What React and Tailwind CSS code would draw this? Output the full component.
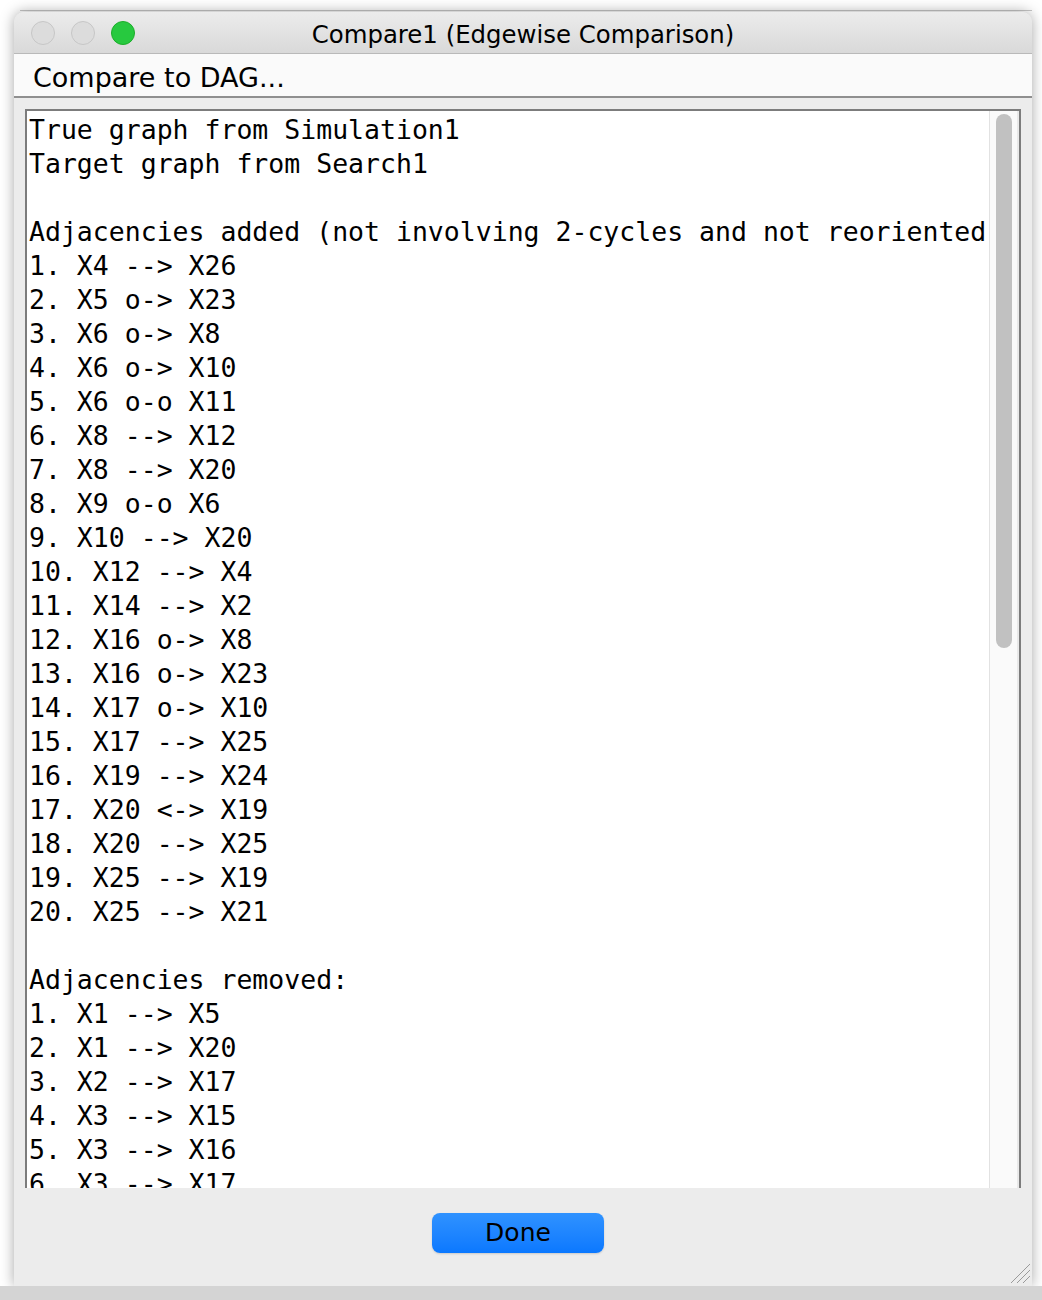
import React from 'react'

const lines = [
  'True graph from Simulation1',
  'Target graph from Search1',
  '',
  'Adjacencies added (not involving 2-cycles and not reoriented',
  '1. X4 --> X26',
  '2. X5 o-> X23',
  '3. X6 o-> X8',
  '4. X6 o-> X10',
  '5. X6 o-o X11',
  '6. X8 --> X12',
  '7. X8 --> X20',
  '8. X9 o-o X6',
  '9. X10 --> X20',
  '10. X12 --> X4',
  '11. X14 --> X2',
  '12. X16 o-> X8',
  '13. X16 o-> X23',
  '14. X17 o-> X10',
  '15. X17 --> X25',
  '16. X19 --> X24',
  '17. X20 <-> X19',
  '18. X20 --> X25',
  '19. X25 --> X19',
  '20. X25 --> X21',
  '',
  'Adjacencies removed:',
  '1. X1 --> X5',
  '2. X1 --> X20',
  '3. X2 --> X17',
  '4. X3 --> X15',
  '5. X3 --> X16',
  '6. X3 --> X17',
]

const ui = { fontFamily: '"DejaVu Sans", "Liberation Sans", sans-serif' }
const mono = { fontFamily: '"DejaVu Sans Mono", "Liberation Mono", monospace' }

function TrafficLight({ color }) {
  return (
    <div
      className={`w-[24px] h-[24px] rounded-full border ${
        color === 'green' ? 'bg-[#27c93f] border-[#1dad2b]' : 'bg-[#dcdcdc] border-[#c6c6c6]'
      }`}
    />
  )
}

function ResizeGrip() {
  return (
    <svg width="22" height="22" viewBox="0 0 22 22" className="text-[#9a9a9a]">
      <line x1="2" y1="21" x2="21" y2="2" stroke="currentColor" strokeWidth="1" />
      <line x1="8" y1="21" x2="21" y2="8" stroke="currentColor" strokeWidth="1" />
      <line x1="14" y1="21" x2="21" y2="14" stroke="currentColor" strokeWidth="1" />
    </svg>
  )
}

export default function App() {
  return (
    <div className="w-[1042px] h-[1300px] bg-white flex flex-col overflow-hidden" style={ui}>
      <div className="h-[10px] shrink-0" />
      <div className="h-px shrink-0 ml-[20px] w-[1012px] bg-[#c8c8c8]" />
      <div className="h-px shrink-0" />

      {/* Window */}
      <div className="ml-[14px] w-[1018px] h-[1274px] shrink-0 rounded-t-[10px] bg-[#ececec] flex flex-col overflow-hidden shadow-[0_0_14px_rgba(0,0,0,0.35)]">
        {/* Title bar */}
        <div className="h-[42px] shrink-0 relative flex items-center bg-gradient-to-b from-[#ececec] to-[#d9d9d9] border-b border-[#b9b9b9]">
          <div className="flex items-center gap-[16px] pl-[17px]">
            <TrafficLight />
            <TrafficLight />
            <TrafficLight color="green" />
          </div>
          <div className="absolute inset-0 pt-[5px] flex items-center justify-center text-[24.4px] text-black">
            Compare1 (Edgewise Comparison)
          </div>
        </div>

        {/* Menu bar */}
        <div className="h-[44px] shrink-0 bg-[#fafafa] border-b-2 border-[#8f8f8f] flex items-center pl-[19px] pt-[6px] text-[27px] text-black">
          Compare to DAG...
        </div>

        {/* Text pane */}
        <div className="pt-[11px] px-[11px] shrink-0">
          <div className="h-[1079px] border-t-2 border-x-2 border-[#7c7c7c] bg-white flex overflow-hidden">
            <div
              className="flex-1 pl-[2px] pt-[2px] text-[26.5px] leading-[34px] text-black whitespace-pre overflow-hidden"
              style={mono}
            >
              {lines.map((l, i) => (
                <div key={i} className="h-[34px]">{l}</div>
              ))}
            </div>
            <div className="w-[30px] shrink-0 bg-[#fafafa] border-l border-[#e2e2e2] border-r-2 border-r-[#e9e9e9] flex justify-center pt-[3px]">
              <div className="w-[16px] h-[534px] rounded-full bg-[#c1c1c1]" />
            </div>
          </div>
        </div>

        {/* Button panel */}
        <div className="flex-1 relative flex justify-center pt-[25px] pr-[10px]">
          <button className="w-[172px] h-[40px] rounded-[8px] bg-gradient-to-b from-[#2f92ff] to-[#0a78ff] text-[25px] text-black flex items-center justify-center shadow-[0_1px_2px_rgba(0,0,0,0.15)]">
            Done
          </button>
          <div className="absolute right-[1px] bottom-[2px]">
            <ResizeGrip />
          </div>
        </div>
      </div>

      <div className="flex-1 bg-[#d4d4d4]" />
    </div>
  )
}
